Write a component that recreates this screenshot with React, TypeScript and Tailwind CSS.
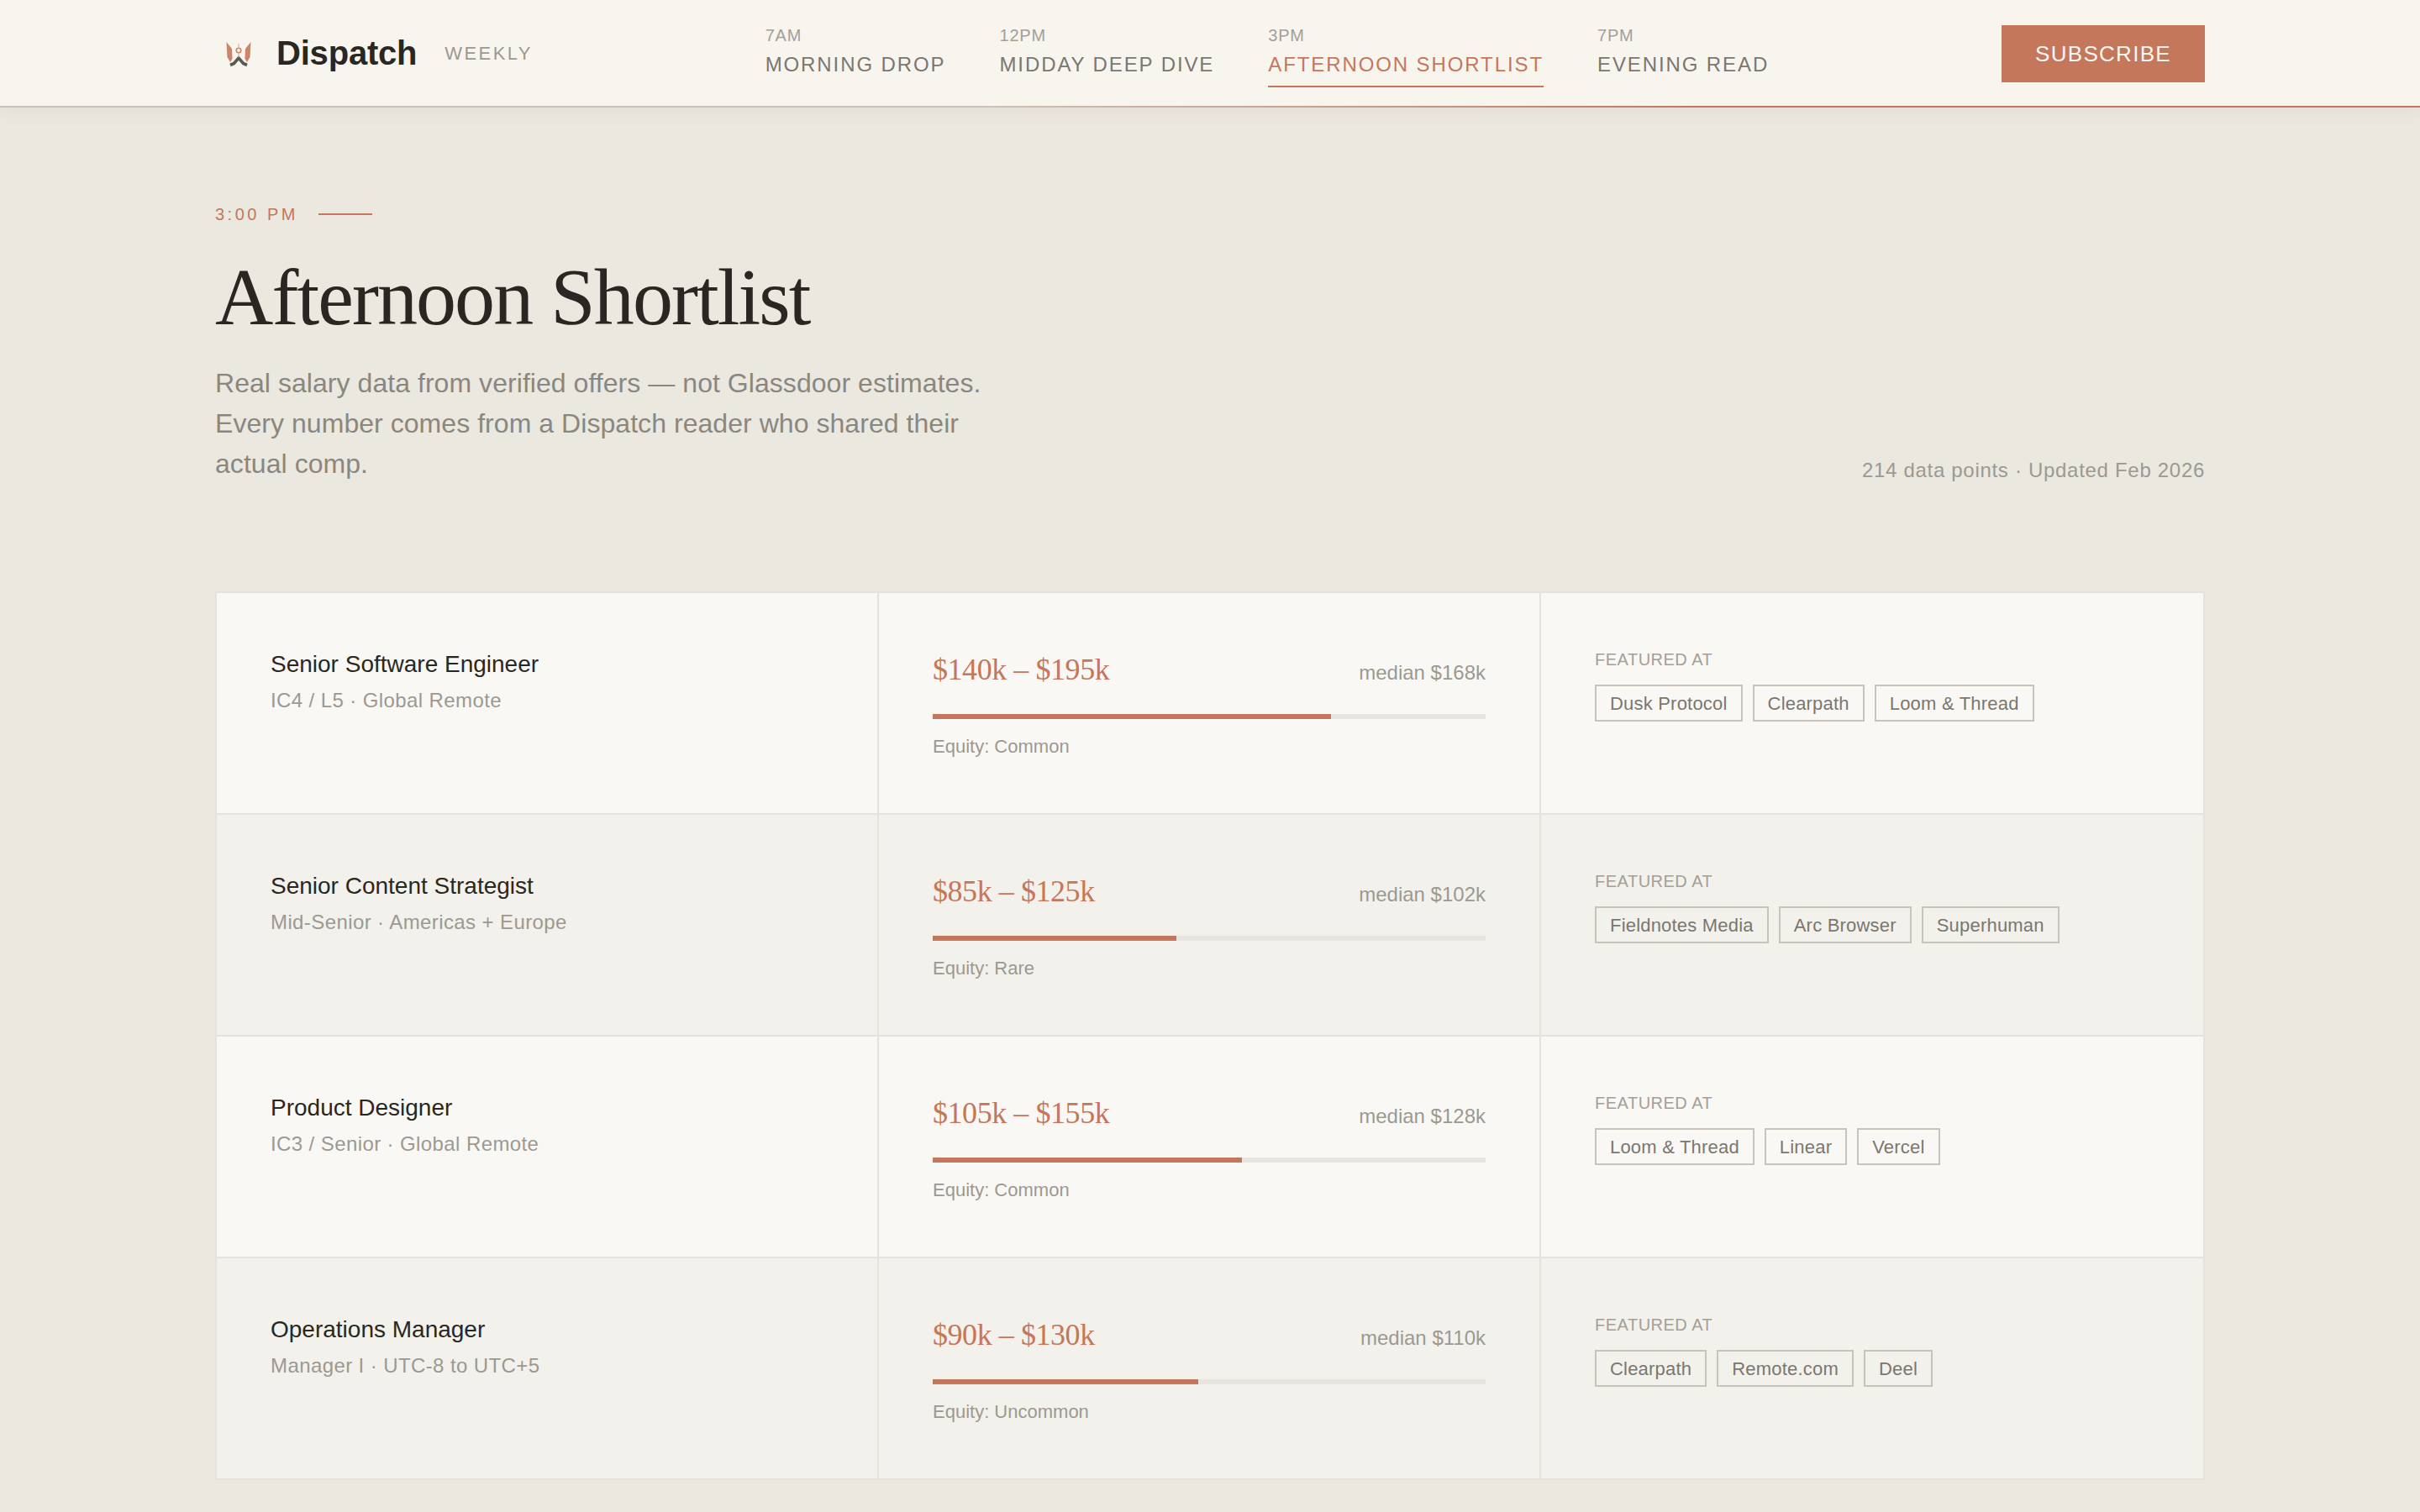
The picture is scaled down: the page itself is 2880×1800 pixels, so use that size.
const navItems = [
  { time: "7AM", label: "MORNING DROP" },
  { time: "12PM", label: "MIDDAY DEEP DIVE" },
  { time: "3PM", label: "AFTERNOON SHORTLIST", active: true },
  { time: "7PM", label: "EVENING READ" },
];

const roles = [
  {
    title: "Senior Software Engineer",
    meta: "IC4 / L5 · Global Remote",
    range: "$140k – $195k",
    median: "median $168k",
    fill: 72,
    equity: "Equity: Common",
    tags: ["Dusk Protocol", "Clearpath", "Loom & Thread"],
  },
  {
    title: "Senior Content Strategist",
    meta: "Mid-Senior · Americas + Europe",
    range: "$85k – $125k",
    median: "median $102k",
    fill: 44,
    equity: "Equity: Rare",
    tags: ["Fieldnotes Media", "Arc Browser", "Superhuman"],
  },
  {
    title: "Product Designer",
    meta: "IC3 / Senior · Global Remote",
    range: "$105k – $155k",
    median: "median $128k",
    fill: 56,
    equity: "Equity: Common",
    tags: ["Loom & Thread", "Linear", "Vercel"],
  },
  {
    title: "Operations Manager",
    meta: "Manager I · UTC-8 to UTC+5",
    range: "$90k – $130k",
    median: "median $110k",
    fill: 48,
    equity: "Equity: Uncommon",
    tags: ["Clearpath", "Remote.com", "Deel"],
  },
];

function Logo() {
  return (
    <svg viewBox="0 0 40 40" className="h-[40px] w-[40px]" fill="none">
      <path d="M5.5 7 L12 15 L12.5 27 L10 31 L6.5 25 Z" fill="#cc8568" />
      <path d="M34.5 7 L28 15 L27.5 27 L30 31 L33.5 25 Z" fill="#cc8568" />
      <path d="M10 34.5 L14.5 32.5 L20 26 L25.5 32.5 L30 34.5" stroke="#5c5852" strokeWidth="3.6" />
      <circle cx="20" cy="17" r="2.8" stroke="#cc8568" strokeWidth="1.6" />
      <path d="M20 9 L20 14 M20 20 L20 25" stroke="#e0b5a2" strokeWidth="1.2" />
    </svg>
  );
}

function Header() {
  return (
    <header className="relative z-10 bg-[#f8f5ef] shadow-[0_2px_24px_rgba(70,60,45,0.07)]">
      <div className="flex h-[126px] items-center justify-between px-[256px]">
        <div className="flex items-center">
          <div className="ml-[8px] mr-[25px]">
            <Logo />
          </div>
          <span className="text-[40px] font-bold tracking-[-0.2px] text-[#2a2723]">
            Dispatch
          </span>
          <span className="ml-[33px] text-[22px] tracking-[2.4px] text-[#9c9992]">
            WEEKLY
          </span>
        </div>
        <nav className="mt-[8px] flex gap-[64px]">
          {navItems.map((item) => (
            <div key={item.label} className="flex flex-col">
              <span className="text-[20px] leading-[24px] tracking-[0.8px] text-[#a3a098]">
                {item.time}
              </span>
              <span
                className={
                  item.active
                    ? "mt-[8px] border-b-2 border-[#c4775a] pb-[10px] text-[24px] leading-[30px] tracking-[1.9px] text-[#c4775a]"
                    : "mt-[8px] border-b-2 border-transparent pb-[10px] text-[24px] leading-[30px] tracking-[1.9px] text-[#7a7770]"
                }
              >
                {item.label}
              </span>
            </div>
          ))}
        </nav>
        <button
          type="button"
          className="mt-[2px] h-[68px] w-[242px] bg-[#c4775a] text-[26px] tracking-[1.3px] text-[#faf6ef]"
        >
          SUBSCRIBE
        </button>
      </div>
      <div className="h-[2px] bg-gradient-to-r from-[#cbc3ba] from-40% to-[#c4775a] to-70%" />
    </header>
  );
}

function Hero() {
  return (
    <section className="flex items-end justify-between pt-[114px]">
      <div>
        <div className="flex items-center gap-[24px]">
          <span className="text-[20px] leading-[26px] tracking-[3.5px] text-[#c4775a]">
            3:00 PM
          </span>
          <span className="h-[2px] w-[64px] bg-[#c4775a]" />
        </div>
        <h1 className="mt-[34px] font-['Liberation_Serif',serif] text-[96px] leading-[104px] tracking-[-1.92px] text-[#2a2723]">
          Afternoon Shortlist
        </h1>
        <p className="mt-[26px] w-[960px] text-[32px] leading-[48px] tracking-[0.05px] text-[#8a8781]">
          Real salary data from verified offers — not Glassdoor estimates.
          <br />
          Every number comes from a Dispatch reader who shared their
          <br />
          actual comp.
        </p>
      </div>
      <p className="text-[24px] leading-[32px] tracking-[0.7px] text-[#9c9992]">
        214 data points · Updated Feb 2026
      </p>
    </section>
  );
}

function RoleRow({ role, even }: { role: (typeof roles)[number]; even: boolean }) {
  const bg = even ? "bg-[#f3f1eb]" : "bg-[#faf8f4]";
  return (
    <div
      className={`grid h-[264px] grid-cols-3 border-b-2 border-[#e6e3dc] last:h-[262px] last:border-b-0 ${bg}`}
    >
      <div className="border-r-2 border-[#e6e3dc] px-[64px] pt-[67px]">
        <div className="text-[28px] leading-[36px] text-[#2a2723]">{role.title}</div>
        <div className="mt-[9px] text-[24px] leading-[32px] tracking-[0.4px] text-[#9c9992]">
          {role.meta}
        </div>
      </div>
      <div className="border-r-2 border-[#e6e3dc] px-[64px] pt-[69px]">
        <div className="flex items-baseline justify-between">
          <span className="font-['Liberation_Serif',serif] text-[36px] leading-[44px] tracking-[-0.44px] text-[#c4775a]">
            {role.range}
          </span>
          <span className="text-[24px] leading-[32px] text-[#9c9992]">{role.median}</span>
        </div>
        <div className="mt-[31px] h-[6px] bg-[#e8e5de]">
          <div className="h-full bg-[#c4775a]" style={{ width: `${role.fill}%` }} />
        </div>
        <div className="mt-[19px] text-[22px] leading-[28px] text-[#9c9992]">
          {role.equity}
        </div>
      </div>
      <div className="px-[64px] pt-[67px]">
        <div className="text-[20px] leading-[24px] tracking-[0.5px] text-[#a3a098]">
          FEATURED AT
        </div>
        <div className="mt-[18px] flex gap-[12px]">
          {role.tags.map((tag) => (
            <span
              key={tag}
              className="flex h-[44px] items-center border-2 border-[#c8c4ba] px-[16px] text-[22px] tracking-[0.2px] text-[#7a7770]"
            >
              {tag}
            </span>
          ))}
        </div>
      </div>
    </div>
  );
}

export default function App() {
  return (
    <div className="h-[1800px] overflow-hidden bg-[#ebe8e0] font-['Liberation_Sans',Arial,sans-serif]">
      <Header />
      <main className="px-[256px]">
        <Hero />
        <div className="mt-[128px] border-2 border-[#e6e3dc]">
          {roles.map((role, i) => (
            <RoleRow key={role.title} role={role} even={i % 2 === 1} />
          ))}
        </div>
      </main>
    </div>
  );
}
